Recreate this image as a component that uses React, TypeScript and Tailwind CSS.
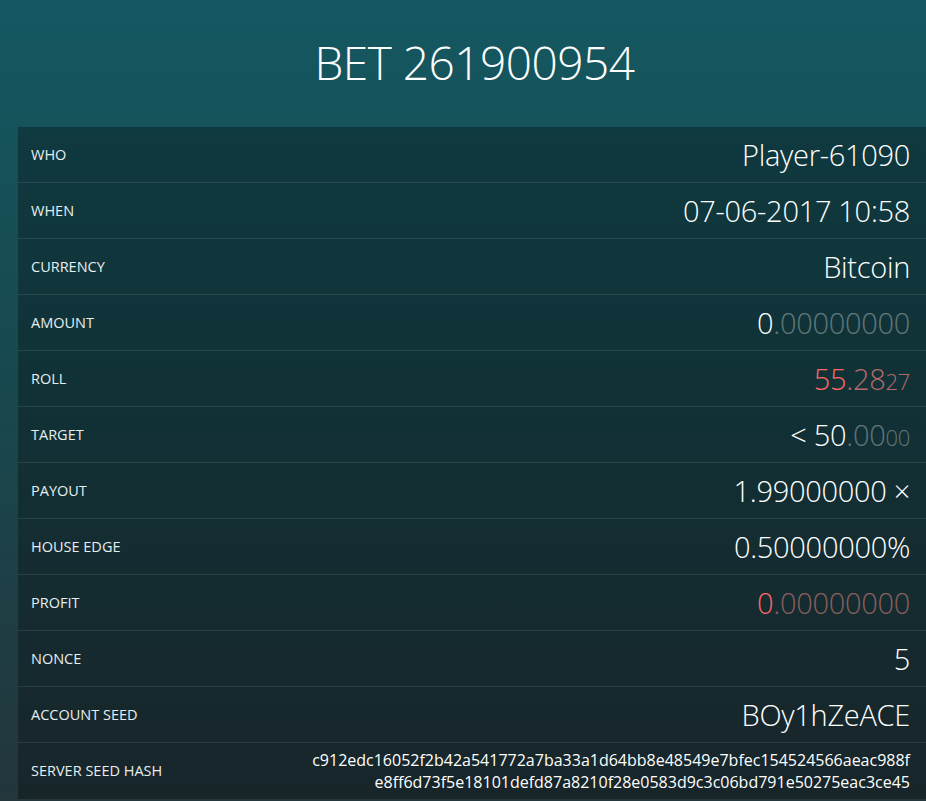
import type { ReactNode } from "react";

type Row = { label: string; value: ReactNode };

const dim = "text-white/35";
const redDim = "text-[#b86a6a]";

const rows: Row[] = [
  { label: "Who", value: "Player-61090" },
  { label: "When", value: "07-06-2017 10:58" },
  { label: "Currency", value: "Bitcoin" },
  {
    label: "Amount",
    value: (
      <>
        0<span className={dim}>.00000000</span>
      </>
    ),
  },
  {
    label: "Roll",
    value: (
      <span className="text-[#ff6666]">
        55<span className={redDim}>.28</span>
        <span className={`${redDim} text-[22px]`}>27</span>
      </span>
    ),
  },
  {
    label: "Target",
    value: (
      <>
        &lt; 50<span className={dim}>.00</span>
        <span className={`${dim} text-[22px]`}>00</span>
      </>
    ),
  },
  { label: "Payout", value: "1.99000000 ×" },
  { label: "House edge", value: "0.50000000%" },
  {
    label: "Profit",
    value: (
      <span className="text-[#ff6666]">
        0<span className="text-[#8a5f5e]">.00000000</span>
      </span>
    ),
  },
  { label: "Nonce", value: "5" },
  { label: "Account seed", value: "BOy1hZeACE" },
];

export default function App() {
  return (
    <div
      className="h-[801px] w-[926px] overflow-hidden bg-gradient-to-b from-[#145861] via-[#18474e] to-[#22363c] text-white"
      style={{ fontFamily: '"Open Sans", "Noto Sans", sans-serif' }}
    >
      <div className="ml-[18px] w-[913px]">
        <h1 className="flex h-[127px] items-center justify-center pb-[2px] text-[46px] font-light tracking-[-0.5px]">
          BET 261900954
        </h1>
        <div className="bg-black/30">
          {rows.map((row) => (
            <div
              key={row.label}
              className="flex h-[56px] items-center justify-between border-b border-white/10 pr-[21px] pl-[13px]"
            >
              <span className="text-[14.5px] uppercase text-[#e6eef0]">
                {row.label}
              </span>
              <span className="text-[29px] font-light tracking-[-0.3px]">
                {row.value}
              </span>
            </div>
          ))}
          {/* hash row */}
          <div className="flex h-[56px] items-center justify-between pr-[21px] pl-[13px]">
            <span className="text-[14.5px] uppercase text-[#e6eef0]">
              Server seed hash
            </span>
            <span className="text-right text-[16px] leading-[22px]">
              c912edc16052f2b42a541772a7ba33a1d64bb8e48549e7bfec154524566aeac988f
              <br />
              e8ff6d73f5e18101defd87a8210f28e0583d9c3c06bd791e50275eac3ce45
            </span>
          </div>
        </div>
      </div>
    </div>
  );
}
